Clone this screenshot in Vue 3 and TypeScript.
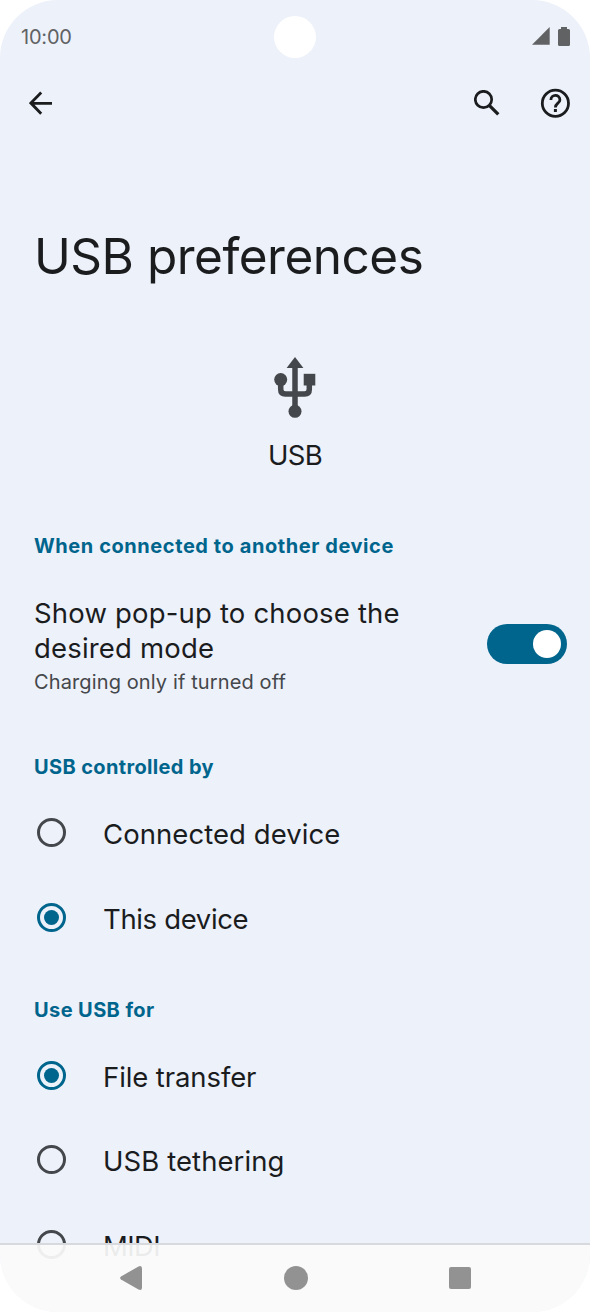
<script setup lang="ts">
import { ref } from 'vue'

interface Option {
  id: string
  label: string
}

const controllers: Option[] = [
  { id: 'connected', label: 'Connected device' },
  { id: 'this', label: 'This device' },
]
const uses: Option[] = [
  { id: 'file', label: 'File transfer' },
  { id: 'tethering', label: 'USB tethering' },
  { id: 'midi', label: 'MIDI' },
]

const controller = ref('this')
const use = ref('file')
const showPopup = ref(true)
</script>

<template>
  <div class="phone">
    <header class="status">
      <span class="time">10:00</span>
      <span class="camera"></span>
      <span class="indicators">
        <svg width="18" height="18" viewBox="0 0 18 18"><path d="M0 17.7L17.7 0V17.7Z" fill="#606264" /></svg>
        <svg width="12" height="19" viewBox="0 0 12 19"><path d="M3 0H9V2H10.500Q12 2 12 3.500V17.500Q12 19 10.500 19H1.500Q0 19 0 17.500V3.500Q0 2 1.500 2H3Z" fill="#606264" /></svg>
      </span>
    </header>

    <nav class="toolbar">
      <svg class="back" width="24" height="24" viewBox="0 0 24 24" fill="none" stroke="#1a1c1e" stroke-width="2.800">
        <path d="M23 12.300H2.500M12.200 1.500L1.900 12.100L12.200 22.700" />
      </svg>
      <svg class="search" width="26" height="26" viewBox="0 0 26 26" fill="none" stroke="#1a1c1e">
        <circle cx="9.500" cy="9.500" r="8.200" stroke-width="2.700" />
        <path d="M15 15.200L24.300 24.400" stroke-width="3.300" />
      </svg>
      <svg class="help" width="30" height="30" viewBox="0 0 30 30" fill="none" stroke="#1a1c1e" stroke-width="2.800">
        <circle cx="15.400" cy="15.200" r="13.100" />
        <path d="M10.900 12C10.900 5.900 19.900 5.900 19.900 11.900C19.900 15.200 15.400 15.200 15.400 19.500" />
        <path d="M15.400 21V23.900" stroke-width="3" />
      </svg>
    </nav>

    <h1 class="title">USB preferences</h1>

    <section class="hero">
      <svg width="42" height="62" viewBox="0 0 42 62" fill="#44474b">
        <path d="M21 0L29.400 11H12.600Z" />
        <circle cx="6.700" cy="22.600" r="6.500" />
        <path d="M29.700 16.800H41.300V28.500H29.700Z" />
        <circle cx="21" cy="54.300" r="6.500" />
        <path d="M21 9V50M6.700 25V32.300Q6.700 37 11.400 37H30.600Q35.300 37 35.300 32.300V26" fill="none" stroke="#44474b" stroke-width="5.500" />
      </svg>
      <p class="hero-label">USB</p>
    </section>

    <main class="content">
      <h2 class="heading h-when">When connected to another device</h2>
      <div class="switch-row" @click="showPopup = !showPopup">
        <div class="switch-text">
          <p class="body"><span class="t-show">Show pop-up to choose the</span><br /><span class="t-desired">desired mode</span></p>
          <p class="summary">Charging only if turned off</p>
        </div>
        <span class="switch" :class="{ on: showPopup }"><i></i></span>
      </div>

      <h2 class="heading h-controlled">USB controlled by</h2>
      <div v-for="o in controllers" :key="o.id" class="option" @click="controller = o.id">
        <span class="radio" :class="{ checked: controller === o.id }"></span>
        <span class="body" :class="'t-' + o.id">{{ o.label }}</span>
      </div>

      <h2 class="heading h-use">Use USB for</h2>
      <div v-for="o in uses" :key="o.id" class="option" @click="use = o.id">
        <span class="radio" :class="{ checked: use === o.id }"></span>
        <span class="body" :class="'t-' + o.id">{{ o.label }}</span>
      </div>
    </main>

    <footer class="navbar">
      <svg width="22" height="24" viewBox="0 0 22 24"><path d="M1 10.600L18.500 .4Q22 -1 22 2.500V21.500Q22 25 18.500 23.600L1 13.400Q-.8 12 1 10.600Z" fill="#929292" /></svg>
      <span class="home"></span>
      <span class="recent"></span>
    </footer>
  </div>
</template>

<style>
html,
body {
  margin: 0;
  background: #fff;
}
</style>

<style scoped>
.phone {
  position: relative;
  width: 590px;
  height: 1312px;
  box-sizing: border-box;
  overflow: hidden;
  border-radius: 58px;
  background: #edf1f9;
  color: #1a1c1e;
  font-family: Inter, "Liberation Sans", sans-serif;
}
h1, h2, p { margin: 0; font-weight: 400; }
svg { display: block; flex: none; }
.status {
  display: grid;
  grid-template-columns: 1fr 42px 1fr;
  align-items: center;
  height: 74px;
  padding: 0 20px;
}
.time { padding-left: 1px; font-size: 20px; letter-spacing: -.2px; color: #606264; }
.camera { width: 42px; height: 42px; border-radius: 50%; background: #fff; }
.indicators { display: flex; justify-content: flex-end; align-items: center; gap: 8px; margin-top: -2px; }
.toolbar { display: flex; align-items: center; height: 58px; padding: 0 20px 0 29px; }
.search { margin-left: auto; }
.help { margin-left: 40px; }
.title {
  height: 60px;
  margin: 94px 0 0 34px;
  font-size: 49.5px;
  line-height: 60px;
  letter-spacing: -.5px;
  white-space: nowrap;
}
.hero { display: flex; flex-direction: column; align-items: center; padding-top: 71px; }
.hero-label { margin-top: 19px; height: 34px; font-size: 27.5px; line-height: 34px; letter-spacing: -.7px; }
.content { padding: 0 23px 0 34px; }
.heading {
  height: 26px;
  color: #00658d;
  font-size: 20px;
  font-weight: 700;
  line-height: 26px;
  white-space: nowrap;
}
.h-when { margin-top: 61px; letter-spacing: .57px; }
.switch-row { display: flex; justify-content: space-between; align-items: center; height: 170px; }
.switch-text { padding-top: 3px; }
.body { font-size: 27.5px; line-height: 35px; white-space: nowrap; }
.summary { margin-top: 2px; font-size: 20px; line-height: 28px; letter-spacing: .12px; color: #44474b; white-space: nowrap; }
.t-show, .t-desired { letter-spacing: .18px; }
.t-connected { letter-spacing: .06px; }
.t-this { letter-spacing: -.35px; }
.t-file { letter-spacing: -.1px; }
.t-tethering { letter-spacing: .08px; }
.t-midi { letter-spacing: -.6px; }
.switch { width: 80px; height: 40px; box-sizing: border-box; padding: 6px; border-radius: 20px; background: #8b9198; display: flex; }
.switch.on { justify-content: flex-end; background: #00658d; }
.switch i { width: 28px; height: 28px; border-radius: 50%; background: #fff; }
.h-controlled { margin: 25px 0 10.5px; letter-spacing: .36px; }
.option { display: flex; align-items: center; height: 84.5px; }
.option .body { padding-top: 4px; }
.radio {
  display: grid;
  place-items: center;
  width: 29px;
  height: 29px;
  margin: 0 37px 0 3px;
  box-sizing: border-box;
  border: 3px solid #44474b;
  border-radius: 50%;
}
.radio.checked { border-color: #00658d; }
.radio.checked::after { content: ""; width: 15px; height: 15px; border-radius: 50%; background: #00658d; }
.h-use { margin: 37px 0 10.5px; letter-spacing: .4px; }
.navbar {
  position: absolute;
  inset: auto 0 0;
  display: flex;
  align-items: center;
  height: 69px;
  box-sizing: border-box;
  padding: 0 119px 2px 120px;
  justify-content: space-between;
  border-top: 2px solid #d7d9dd;
  background: rgba(251, 251, 251, .93);
  background-clip: padding-box;
}
.home { width: 24px; height: 24px; border-radius: 50%; background: #929292; }
.recent { width: 22px; height: 22px; border-radius: 2px; background: #929292; }
</style>
